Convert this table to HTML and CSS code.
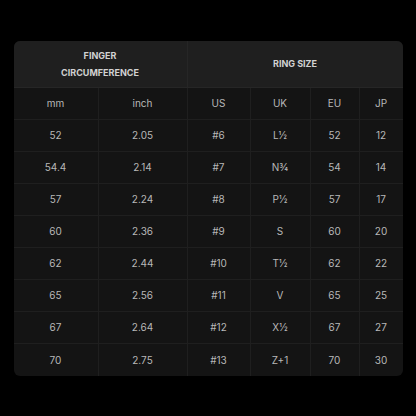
FILE: index.html
```html
<!DOCTYPE html>
<html>
<head>
<meta charset="utf-8">
<link rel="stylesheet" href="styles.css">
</head>
<body>
<div class="card">
  <div class="grid">
    <div class="cell head span2">FINGER<br>CIRCUMFERENCE</div>
    <div class="cell head span4 last">RING SIZE</div>

    <div class="cell sub">mm</div><div class="cell sub">inch</div><div class="cell sub">US</div><div class="cell sub">UK</div><div class="cell sub">EU</div><div class="cell sub last">JP</div>

    <div class="cell">52</div><div class="cell">2.05</div><div class="cell">#6</div><div class="cell">L½</div><div class="cell">52</div><div class="cell last">12</div>
    <div class="cell">54.4</div><div class="cell">2.14</div><div class="cell">#7</div><div class="cell">N¾</div><div class="cell">54</div><div class="cell last">14</div>
    <div class="cell">57</div><div class="cell">2.24</div><div class="cell">#8</div><div class="cell">P½</div><div class="cell">57</div><div class="cell last">17</div>
    <div class="cell">60</div><div class="cell">2.36</div><div class="cell">#9</div><div class="cell">S</div><div class="cell">60</div><div class="cell last">20</div>
    <div class="cell">62</div><div class="cell">2.44</div><div class="cell">#10</div><div class="cell">T½</div><div class="cell">62</div><div class="cell last">22</div>
    <div class="cell">65</div><div class="cell">2.56</div><div class="cell">#11</div><div class="cell">V</div><div class="cell">65</div><div class="cell last">25</div>
    <div class="cell">67</div><div class="cell">2.64</div><div class="cell">#12</div><div class="cell">X½</div><div class="cell">67</div><div class="cell last">27</div>
    <div class="cell bottom">70</div><div class="cell bottom">2.75</div><div class="cell bottom">#13</div><div class="cell bottom">Z+1</div><div class="cell bottom">70</div><div class="cell bottom last">30</div>
  </div>
</div>
</body>
</html>
```

FILE: styles.css
```css
html, body {
  margin: 0;
  padding: 0;
  background: #000;
}
body {
  width: 416px;
  height: 416px;
  display: flex;
  align-items: center;
  justify-content: center;
  font-family: Inter, "Liberation Sans", sans-serif;
}
.card {
  width: 389px;
  border-radius: 6px;
  overflow: hidden;
  background: #141414;
}
.grid {
  display: grid;
  grid-template-columns: 85px 89px 63px 60px 49px 43px;
  grid-template-rows: 47px repeat(9, 32px);
}
.cell {
  display: flex;
  align-items: center;
  justify-content: center;
  text-align: center;
  font-size: 10px;
  color: #b8b8b8;
  border-right: 1px solid #1f1f1f;
  border-bottom: 1px solid #1f1f1f;
  box-sizing: border-box;
}
.cell.last {
  border-right: none;
}
.cell.bottom {
  border-bottom: none;
}
.head {
  background: #1f1f1f;
  border-color: #262626;
  font-size: 9px;
  font-weight: 700;
  color: #d2d2d2;
  line-height: 17px;
}
.span2 { grid-column: span 2; }
.span4 { grid-column: span 4; }
.sub {
  background: #141414;
}
```
